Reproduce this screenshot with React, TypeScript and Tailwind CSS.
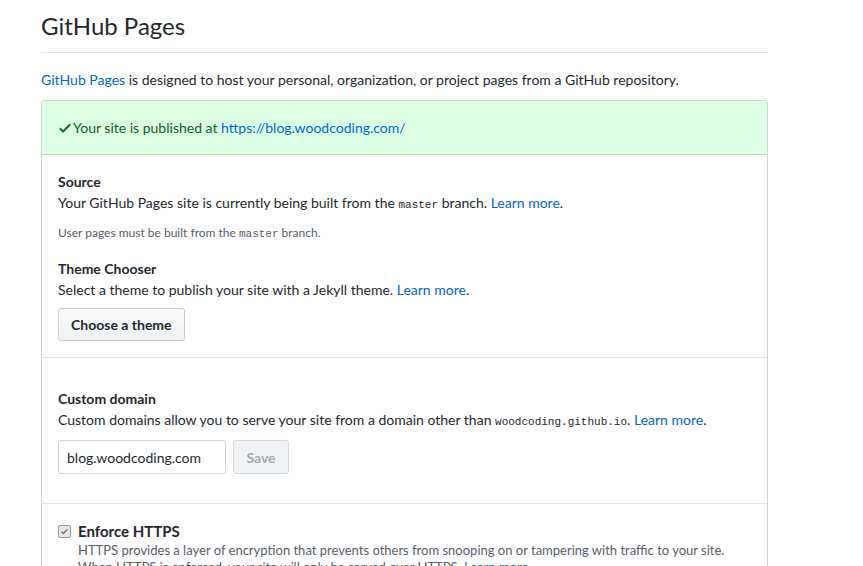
export default function App() {
  return (
    <div className="min-h-screen bg-white font-['Lato',sans-serif] text-[14px] leading-[21px] text-[#24292e]">
      <div className="ml-[41px] w-[727px]">
        {/* Header */}
        <div className="flex h-[53px] items-end border-b border-[#e1e4e8] pb-[11px]">
          <h1 className="text-[24px] leading-[30px] font-normal">GitHub Pages</h1>
        </div>
        <p className="mt-[16px] mb-[10px]">
          <a className="text-[#0366d6]">GitHub Pages</a> is designed to host your personal, organization, or project pages
          from a GitHub repository.
        </p>

        {/* Box */}
        <div className="border border-[#d1d5da] rounded-[3px]">
          <div className="flex items-center gap-[2px] border-b border-[#bfd9c4] bg-[#dcffe4] px-[17px] py-[16px] text-[#165c26]">
            <svg width="12" height="16" viewBox="0 0 12 16" className="fill-[#1e6b33]">
              <path d="M12 5l-8 8-4-4 1.5-1.5L4 10l6.5-6.5L12 5z" />
            </svg>
            <span>
              Your site is published at <a className="text-[#0366d6]">https://blog.woodcoding.com/</a>
            </span>
          </div>

          {/* Source + Theme */}
          <div className="border-b border-[#e1e4e8] px-[16px] pt-[16px] pb-[16px]">
            <h3 className="font-bold">Source</h3>
            <p>
              Your GitHub Pages site is currently being built from the{" "}
              <code className="font-['Liberation_Mono',monospace] text-[11px]">master</code> branch.{" "}
              <a className="text-[#0366d6]">Learn more</a>.
            </p>
            <p className="mt-[8px] text-[12px] leading-[18px] text-[#586069]">
              User pages must be built from the{" "}
              <code className="font-['Liberation_Mono',monospace] text-[11px]">master</code> branch.
            </p>
            <h3 className="mt-[15px] font-bold">Theme Chooser</h3>
            <p>
              Select a theme to publish your site with a Jekyll theme. <a className="text-[#0366d6]">Learn more</a>.
            </p>
            <button className="mt-[8px] h-[33px] rounded-[3px] border border-[#c9ccd1] bg-gradient-to-b from-[#fafbfc] to-[#eff3f6] px-[12px] font-bold text-[#24292e]">
              Choose a theme
            </button>
          </div>

          {/* Custom domain */}
          <div className="border-b border-[#e1e4e8] px-[16px] pt-[30px] pb-[29px]">
            <h3 className="font-bold">Custom domain</h3>
            <p>
              Custom domains allow you to serve your site from a domain other than{" "}
              <code className="font-['Liberation_Mono',monospace] text-[11px]">woodcoding.github.io</code>.{" "}
              <a className="text-[#0366d6]">Learn more</a>.
            </p>
            <div className="mt-[7px] flex gap-[7px]">
              <div className="flex h-[34px] w-[168px] items-center rounded-[3px] border border-[#d1d5da] px-[8px]">
                blog.woodcoding.com
              </div>
              <button className="h-[34px] w-[56px] rounded-[3px] border border-[#d3d6db] bg-[#eff3f6] font-bold text-[#a3a8ad]">
                Save
              </button>
            </div>
          </div>

          {/* Enforce HTTPS */}
          <div className="flex gap-[7px] px-[16px] pt-[17px] pb-[10px]">
            <span className="mt-[4px] flex h-[13px] w-[13px] shrink-0 items-center justify-center rounded-[2px] border border-[#9a9a9a] bg-[#e6e6e6]">
              <svg width="9" height="9" viewBox="0 0 12 16" className="fill-[#555]">
                <path d="M12 5l-8 8-4-4 1.5-1.5L4 10l6.5-6.5L12 5z" />
              </svg>
            </span>
            <div>
              <div className="text-[15px] leading-[21px] font-bold">Enforce HTTPS</div>
              <p className="text-[13px] leading-[17px] text-[#586069]">
                HTTPS provides a layer of encryption that prevents others from snooping on or tampering with traffic to
                your site.
                <br />
                When HTTPS is enforced, your site will only be served over HTTPS. <a className="text-[#0366d6]">Learn more</a>.
              </p>
            </div>
          </div>
        </div>
      </div>
    </div>
  );
}
